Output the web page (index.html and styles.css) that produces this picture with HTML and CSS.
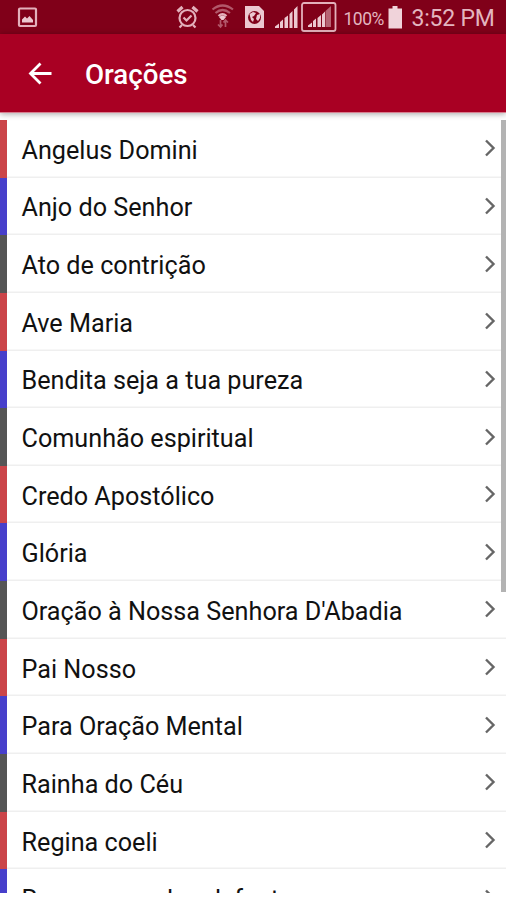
FILE: index.html
```html
<!DOCTYPE html>
<html lang="pt">
<head>
<meta charset="utf-8">
<title>Orações</title>
<link rel="stylesheet" href="styles.css">
</head>
<body>
<div class="screen">
  <header class="status">
    <svg class="status-icons" width="338" height="34" viewBox="0 0 338 34">
      <g class="tint-stroke">
        <rect x="19" y="8.5" width="17" height="17.5" rx="1"/>
        <circle cx="187.5" cy="18" r="8"/>
        <path d="M183.5 17.5l3 3 5-5M182 25l-2.5 2.500M193 25l2.500 2.500"/>
        <path d="M177.500 11.500l5-4.500M197.500 11.500l-5-4.500" stroke-width="3.200"/>
        <path class="dim" d="M212.500 9.500q10-8 20.500 0M215.500 13q7-6 14.500 0"/>
        <path d="M218.500 16q4-3.500 8 0"/>
        <path class="dim" d="M220.500 20v7m-2.500-2.500l2.500 2.500 2-2.500M225.500 27v-7m-2 2.500l2-2.500 2.500 2.500" stroke-width="1.700"/>
        <rect x="302" y="3" width="33.500" height="28" rx="2" stroke-width="1.800"/>
      </g>
      <g class="tint-fill">
        <path d="M22 22.500v-3l3-3 2 2 2.500-2.500 3.500 4v2.500z"/>
        <path d="M219 17q3.500-3 7 0l-2.500 3h-2z"/>
        <path d="M245 6h14l5 5v17h-19z"/>
        <path d="M275 28v-1.500l4-3v4.500zM280 28v-6l3-2.500v8.500zM284.500 28v-10l3.500-2.500v12.500zM289.500 28v-14l3-3v17zM294 28v-18.500l3.500-3.500v22z"/>
        <path d="M308 27v-1.500l4-3v4.500zM313 27v-6l3-2.500v8.500zM317.500 27v-9l3.500-3v12zM322 27v-12.500l3-3v15.500z"/>
        <path class="dim" d="M325.500 27v-16l5.500-5v21z"/>
      </g>
      <circle class="globe" cx="254.500" cy="17.500" r="6.500"/>
      <path class="land" d="M249.500 14l3.500-2 3 1-2 3-2 1 2 2-1 3-2-2zM257 15l3-1v4l-2 3-2-2z"/>
    </svg>
    <span class="percent">100%</span>
    <svg class="battery" width="16" height="34" viewBox="0 0 16 34"><path d="M5.500 6h5v2.500H15V28.500H1.500V8.500h4z"/></svg>
    <span class="time">3:52 PM</span>
  </header>
  <nav class="bar">
    <svg class="back" width="24" height="24" viewBox="0 0 24 24"><path d="M23.500 11.500H3M12.500 1.500L2.500 11.500l10 10"/></svg>
    <h1>Orações</h1>
  </nav>
  <main class="content">
    <ul class="list">
      <li class="row red"><span>Angelus Domini</span><svg class="chev" viewBox="0 0 12 18"><path d="M2 1.500l7.500 7.500L2 16.500"/></svg></li>
      <li class="row blue"><span>Anjo do Senhor</span><svg class="chev" viewBox="0 0 12 18"><path d="M2 1.500l7.500 7.500L2 16.500"/></svg></li>
      <li class="row gray"><span>Ato de contrição</span><svg class="chev" viewBox="0 0 12 18"><path d="M2 1.500l7.500 7.500L2 16.500"/></svg></li>
      <li class="row red"><span>Ave Maria</span><svg class="chev" viewBox="0 0 12 18"><path d="M2 1.500l7.500 7.500L2 16.500"/></svg></li>
      <li class="row blue"><span>Bendita seja a tua pureza</span><svg class="chev" viewBox="0 0 12 18"><path d="M2 1.500l7.500 7.500L2 16.500"/></svg></li>
      <li class="row gray"><span>Comunhão espiritual</span><svg class="chev" viewBox="0 0 12 18"><path d="M2 1.500l7.500 7.500L2 16.500"/></svg></li>
      <li class="row red"><span>Credo Apostólico</span><svg class="chev" viewBox="0 0 12 18"><path d="M2 1.500l7.500 7.500L2 16.500"/></svg></li>
      <li class="row blue"><span>Glória</span><svg class="chev" viewBox="0 0 12 18"><path d="M2 1.500l7.500 7.500L2 16.500"/></svg></li>
      <li class="row gray"><span>Oração à Nossa Senhora D'Abadia</span><svg class="chev" viewBox="0 0 12 18"><path d="M2 1.500l7.500 7.500L2 16.500"/></svg></li>
      <li class="row red"><span>Pai Nosso</span><svg class="chev" viewBox="0 0 12 18"><path d="M2 1.500l7.500 7.500L2 16.500"/></svg></li>
      <li class="row blue"><span>Para Oração Mental</span><svg class="chev" viewBox="0 0 12 18"><path d="M2 1.500l7.500 7.500L2 16.500"/></svg></li>
      <li class="row gray"><span>Rainha do Céu</span><svg class="chev" viewBox="0 0 12 18"><path d="M2 1.500l7.500 7.500L2 16.500"/></svg></li>
      <li class="row red"><span>Regina coeli</span><svg class="chev" viewBox="0 0 12 18"><path d="M2 1.500l7.500 7.500L2 16.500"/></svg></li>
      <li class="row blue"><span>Responso pelos defuntos</span><svg class="chev" viewBox="0 0 12 18"><path d="M2 1.500l7.500 7.500L2 16.500"/></svg></li>
    </ul>
    <div class="scrollbar"></div>
  </main>
</div>
</body>
</html>
```

FILE: styles.css
```css
* { box-sizing: border-box; }
body { margin: 0; background: #fff; font-family: Roboto, "Liberation Sans", sans-serif; }
.screen { width: 506px; height: 900px; overflow: hidden; display: flex; flex-direction: column; }
.status { flex: none; height: 34px; background: #800019; color: #e3b5bf; display: flex; align-items: center; }
.status-icons { flex: none; }
.tint-stroke { fill: none; stroke: #e3b0bb; stroke-width: 2.2; }
.tint-fill { fill: #ecc8d0; }
.dim { opacity: .5; }
.globe { fill: #800019; }
.land { fill: #ecc8d0; }
.percent { width: 49px; padding-left: 5.5px; font-size: 17.5px; line-height: 34px; padding-top: 3px; white-space: nowrap; letter-spacing: -.5px; }
.battery { flex: none; fill: #f0d3da; }
.time { margin-left: 8.5px; padding-top: 3px; font-size: 23px; line-height: 32px; white-space: nowrap; letter-spacing: -.2px; }
.bar { flex: none; height: 79px; background: #a90023; display: flex; align-items: center; padding: 1px 0 0 28px; position: relative; z-index: 1; border-bottom: 1px solid #d77f90; box-shadow: 0 1px 6px rgba(0,0,0,.35); }
.back { fill: none; stroke: #fff; stroke-width: 2.8; }
h1 { margin: 3px 0 0 33px; color: #fff; font-size: 27.7px; font-weight: 500; line-height: 36px; }
.content { height: 780px; padding-top: 7px; overflow: hidden; position: relative; }
.list { list-style: none; margin: 0; padding: 0; }
.row { height: 57.65px; border-left: 7.5px solid; padding: 3px 10px 0 14.5px; display: flex; align-items: center; justify-content: space-between; box-shadow: inset 0 -1.5px #efefef; font-size: 25.2px; }
.row span { color: #111; white-space: nowrap; }
.red { border-color: #cb4549; }
.blue { border-color: #473fcb; }
.gray { border-color: #555; }
.chev { width: 12px; height: 18px; margin-top: -4px; fill: none; stroke: #666; stroke-width: 2.4; }
.scrollbar { position: absolute; right: 0; top: 7px; width: 5px; height: 472px; background: #b3b3b3; }
```
